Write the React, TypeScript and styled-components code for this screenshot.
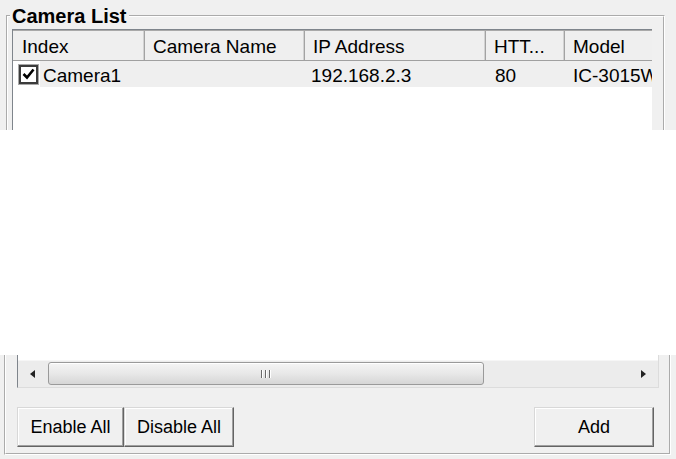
import React from 'react';
import styled, { createGlobalStyle } from 'styled-components';

const GlobalStyle = createGlobalStyle`
  html, body {
    margin: 0;
    padding: 0;
    background: #f0f0f0;
  }
  body {
    font-family: "Liberation Sans", Arial, sans-serif;
    color: #000;
  }
`;

const Screen = styled.div`
  width: 676px;
  height: 459px;
  display: flex;
  flex-direction: column;
  overflow: hidden;
  background: #f0f0f0;
`;

// upper slice of the dialog (title + header + first row)
const TopSlice = styled.div`
  height: 130px;
  flex: none;
  overflow: hidden;
  display: flex;
  align-items: flex-start;
  padding: 5px 0 0 6px;
  box-sizing: border-box;
`;

const GroupTop = styled.fieldset`
  margin: 0;
  width: 659px;
  min-width: 0;
  height: 220px;
  flex: none;
  box-sizing: border-box;
  border: 2px groove #ffffff;
  border-bottom: none;
  padding: 2px 11px 0 4px;
`;

const Legend = styled.legend`
  margin-left: -2px;
  padding: 0 2px;
  font-size: 20px;
  font-weight: bold;
  line-height: 22px;
`;

const ListTop = styled.div`
  height: 200px;
  background: #fff;
  border-top: 1px solid #7f858c;
  border-left: 1px solid #7f858c;
  overflow: hidden;
`;

const columns = '132px 160px 181px 79px 1fr';

const HeaderRow = styled.div`
  display: grid;
  grid-template-columns: ${columns};
  height: 31px;
  box-sizing: border-box;
  background: #efefef;
  border-top: 1px solid #a9a9a9;
  border-bottom: 1px solid #a0a0a0;
`;

const HeaderCell = styled.div<{ $last?: boolean }>`
  padding: 5px 0 0 8px;
  font-size: 19px;
  line-height: 22px;
  white-space: nowrap;
  overflow: hidden;
  border-right: ${(p) => (p.$last ? 'none' : '1px solid #a3a3a3')};
  box-shadow: ${(p) => (p.$last ? 'none' : 'inset -1px 0 0 #d2d2d2')};
  &:first-child {
    padding-left: 9px;
  }
`;

const Row = styled.div`
  display: grid;
  grid-template-columns: ${columns};
  height: 26px;
  background: #efefef;
`;

const IndexCell = styled.div`
  display: flex;
  align-items: stretch;
`;

const CheckSlot = styled.div`
  width: 27px;
  flex: none;
  background: #fff;
  display: flex;
  align-items: center;
  padding-left: 6px;
  box-sizing: border-box;
`;

const CheckBox = styled.span`
  width: 19px;
  height: 19px;
  box-sizing: border-box;
  border: 2px solid #3c3c3c;
  outline: 1px solid #a8a8a8;
  background: #fff;
  display: flex;
  align-items: center;
  justify-content: center;
`;

const Cell = styled.div<{ $pad?: number }>`
  padding: 3px 0 0 ${(p) => p.$pad ?? 8}px;
  font-size: 19px;
  line-height: 23px;
  white-space: nowrap;
  overflow: hidden;
`;

// empty band in the middle of the capture
const Blank = styled.div`
  height: 225px;
  flex: none;
  background: #fff;
`;

// lower slice of the dialog (scroll bar + buttons)
const BottomSlice = styled.div`
  height: 104px;
  flex: none;
  display: flex;
  padding: 0 5px 4px 4px;
  box-sizing: border-box;
`;

const GroupBottom = styled.div`
  flex: 1;
  display: flex;
  flex-direction: column;
  border: 2px groove #ffffff;
  border-top: none;
  padding: 0 10px 6px 11px;
`;

const ListBottom = styled.div`
  padding-top: 5px;
  background: #fff;
  border-left: 1px solid #7f858c;
  border-right: 1px solid #dcdcdc;
  border-bottom: 1px solid #dcdcdc;
`;

const ScrollBar = styled.div`
  height: 27px;
  display: flex;
  background: #ececec;
  box-shadow: inset 0 1px 0 #f6f6f6;
`;

const ArrowBtn = styled.div`
  width: 29px;
  flex: none;
  display: flex;
  align-items: center;
  justify-content: center;
`;

const Track = styled.div`
  flex: 1;
  display: flex;
  align-items: center;
  padding-left: 1px;
`;

const Thumb = styled.div`
  width: 436px;
  height: 23px;
  box-sizing: border-box;
  border: 1px solid #9a9a9a;
  border-radius: 3px;
  background: linear-gradient(#f5f5f5 0%, #e8e8e8 50%, #d6d6d6 100%);
  box-shadow: inset 0 1px 0 #fff;
  display: flex;
  align-items: center;
  justify-content: center;
`;

const ButtonRow = styled.div`
  margin-top: 19px;
  display: flex;
  justify-content: space-between;
  padding-right: 5px;
`;

const ButtonGroup = styled.div`
  display: flex;
`;

const Btn = styled.button<{ $w: number }>`
  width: ${(p) => p.$w}px;
  height: 40px;
  margin: 0;
  padding: 0;
  box-sizing: border-box;
  font-family: "Liberation Sans", Arial, sans-serif;
  font-size: 18px;
  color: #000;
  background: #f0f0f0;
  border: 1px solid;
  border-color: #d8d8d8 #646464 #646464 #d8d8d8;
  box-shadow: inset -1px -1px 0 #a0a0a0, inset 1px 1px 0 #fff;
`;

const Check = () => (
  <svg width="13" height="12" viewBox="0 0 13 12">
    <path d="M1.5 6 L5 9.5 L11.5 1.5" fill="none" stroke="#000" strokeWidth="2.6" />
  </svg>
);

const Arrow = ({ dir }: { dir: 'left' | 'right' }) => (
  <svg width="5" height="8" viewBox="0 0 5 8">
    <path d={dir === 'left' ? 'M5 0 L0 4 L5 8 Z' : 'M0 0 L5 4 L0 8 Z'} fill="#222" />
  </svg>
);

const Grip = () => (
  <svg width="12" height="8" viewBox="0 0 12 8">
    {[1, 5, 9].map((x) => (
      <g key={x}>
        <rect x={x} y="0" width="1" height="8" fill="#6a6a6a" />
        <rect x={x + 1} y="0" width="1" height="8" fill="#fff" />
      </g>
    ))}
  </svg>
);

const headers = ['Index', 'Camera Name', 'IP Address', 'HTT...', 'Model'];

const cameras = [{ name: 'Camera1', cameraName: '', ip: '192.168.2.3', port: '80', model: 'IC-3015W' }];

export default function App() {
  return (
    <Screen>
      <GlobalStyle />
      <TopSlice>
        <GroupTop>
          <Legend>Camera List</Legend>
          <ListTop>
            <HeaderRow>
              {headers.map((h, i) => (
                <HeaderCell key={h} $last={i === headers.length - 1}>
                  {h}
                </HeaderCell>
              ))}
            </HeaderRow>
            {cameras.map((c) => (
              <Row key={c.name}>
                <IndexCell>
                  <CheckSlot>
                    <CheckBox>
                      <Check />
                    </CheckBox>
                  </CheckSlot>
                  <Cell $pad={3}>{c.name}</Cell>
                </IndexCell>
                <Cell>{c.cameraName}</Cell>
                <Cell $pad={6}>{c.ip}</Cell>
                <Cell $pad={9}>{c.port}</Cell>
                <Cell>{c.model}</Cell>
              </Row>
            ))}
          </ListTop>
        </GroupTop>
      </TopSlice>
      <Blank />
      <BottomSlice>
        <GroupBottom>
          <ListBottom>
            <ScrollBar>
              <ArrowBtn>
                <Arrow dir="left" />
              </ArrowBtn>
              <Track>
                <Thumb>
                  <Grip />
                </Thumb>
              </Track>
              <ArrowBtn>
                <Arrow dir="right" />
              </ArrowBtn>
            </ScrollBar>
          </ListBottom>
          <ButtonRow>
            <ButtonGroup>
              <Btn $w={107}>Enable All</Btn>
              <Btn $w={110}>Disable All</Btn>
            </ButtonGroup>
            <Btn $w={120}>Add</Btn>
          </ButtonRow>
        </GroupBottom>
      </BottomSlice>
    </Screen>
  );
}
